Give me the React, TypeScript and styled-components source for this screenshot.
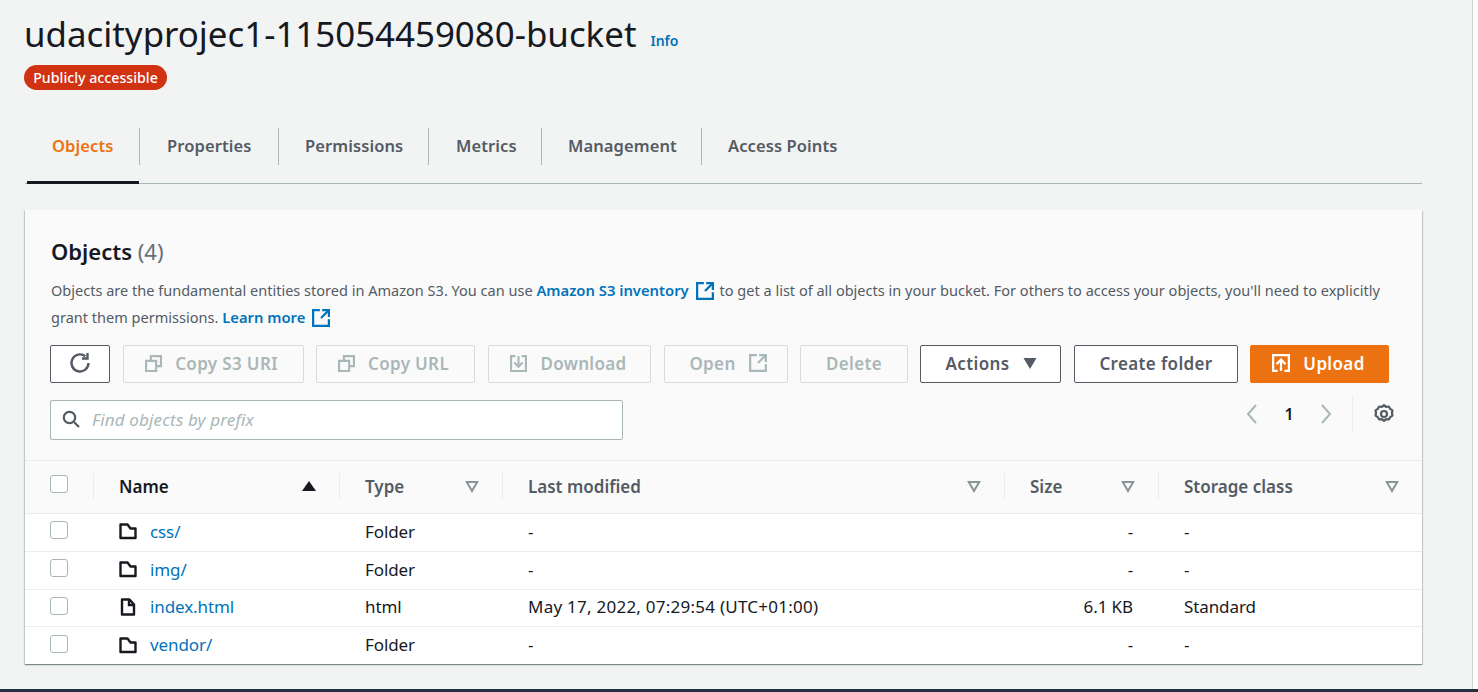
import React from "react";
import styled, { createGlobalStyle } from "styled-components";

const Global = createGlobalStyle`
  html, body { margin: 0; padding: 0; height: 100%; overflow: hidden; background: #f2f3f3; }
  * { box-sizing: border-box; }
  body { font-family: "Noto Sans", "Open Sans", sans-serif; color: #16191f; font-size: 16px; }
`;

const Page = styled.div`
  width: 1478px; height: 692px; display: flex; flex-direction: column; overflow: hidden; background: #f2f3f3;
`;
const Body = styled.div`flex: 1; display: flex; min-height: 0;`;
const Main = styled.main`width: 1473px; padding: 0 0 0 24px; border-right: 1px solid #cfd3d3;`;
const Gutter = styled.div`flex: 1; background: #fff;`;
const Footer = styled.footer`height: 3px; background: #232f3e; flex: none;`;

const TitleRow = styled.div`display: flex; align-items: flex-end; gap: 14px; height: 55px;`;
const Title = styled.h1`margin: 0; font-size: 34.87px; font-weight: 400; line-height: 42px; color: #16191f; white-space: nowrap;`;
const Info = styled.a`font-size: 14px; font-weight: 600; color: #0073bb; line-height: 18px; margin-bottom: 5px;`;
const Badge = styled.div`
  display: inline-flex; align-items: center; justify-content: center; margin-top: 10px; width: 143px; height: 25px;
  border-radius: 13px; background: #d13212; color: #fff; font-size: 14.2px; font-weight: 500;
`;

const Tabs = styled.nav`
  display: flex; margin: 37px 0 0 1px; width: 1397px; height: 57px; border-bottom: 1px solid #aab7b8;
`;
const TabGroup = styled.div`display: flex; margin-left: 2px;`;
const Tab = styled.div<{ $w: number; $pad: number; $active?: boolean; $last?: boolean }>`
  position: relative; width: ${p => p.$w}px; height: 56px; padding: 7px 0 0 ${p => p.$pad}px;
  font-size: 16.5px; font-weight: 600; letter-spacing: 0.1px; line-height: 24px; white-space: nowrap;
  color: ${p => (p.$active ? "#ec7211" : "#545b64")};
  &::after {
    content: ""; position: absolute; right: -1px; top: 1px; height: 37px; width: 1px;
    background: ${p => (p.$last ? "transparent" : "#aab7b8")};
  }
  ${p => p.$active && "&::before { content: ''; position: absolute; left: 0; right: 0; bottom: -1px; height: 3px; background: #16191f; }"}
`;

const Card = styled.section`
  width: 1397px; height: 454px; margin: 26px 0 0 1px; background: #fafafa;
  box-shadow: 0 1px 1px 0 rgba(0,28,36,.3), 1px 1px 1px 0 rgba(0,28,36,.15), -1px 1px 1px 0 rgba(0,28,36,.15);
  display: flex; flex-direction: column;
`;
const CardHead = styled.div`padding: 25px 25px 0 25px; height: 250px; flex: none;`;
const Heading = styled.h2`margin: 0; padding-left: 1px; font-size: 22px; font-weight: 600; line-height: 32px; letter-spacing: 0;`;
const Count = styled.span`font-weight: 400; color: #687078;`;
const Desc = styled.p`
  margin: 10px 0 0; padding-left: 1px; font-size: 14.54px; line-height: 27px; color: #545b64; max-width: 1345px;
`;
const Bold = styled.a`color: #0073bb; font-weight: 600; font-size: 14.8px; display: inline-flex; align-items: center; gap: 7px; margin-right: 2px;`;
const Toolbar = styled.div`display: flex; margin-top: 14px; height: 38px;`;
const Btn = styled.button<{ $w: number; $ml: number; $gap?: number; $nudge?: number; $kind?: "off" | "on" | "primary" }>`
  width: ${p => p.$w}px; margin-left: ${p => p.$ml}px; height: 38px; border-radius: 2px;
  display: inline-flex; align-items: center; justify-content: center; gap: ${p => p.$gap ?? 13}px;
  padding: 0 ${p => Math.max(0, -(p.$nudge ?? 0)) * 2}px 2px ${p => Math.max(0, p.$nudge ?? 0) * 2}px;
  font: 600 17px "Noto Sans", sans-serif; letter-spacing: 0.35px;
  background: ${p => (p.$kind === "primary" ? "#ec7211" : p.$kind === "on" ? "#fff" : "#fafafa")};
  color: ${p => (p.$kind === "primary" ? "#fff" : p.$kind === "on" ? "#545b64" : "#aab7b8")};
  border: 1px solid ${p => (p.$kind === "primary" ? "#ec7211" : p.$kind === "on" ? "#545b64" : "#d5dbdb")};
`;
const SearchRow = styled.div`display: flex; margin-top: 17px; height: 40px;`;
const Search = styled.div`
  width: 573px; height: 40px; display: flex; align-items: center; gap: 12px; padding: 0 0 2px 11px;
  background: #fff; border: 1px solid #aab7b8; border-radius: 2px;
  color: #aab7b8; font-style: italic; font-size: 17px; letter-spacing: 0.15px;
`;
const Pager = styled.div`
  margin-left: auto; display: flex; align-items: center; height: 40px; margin-top: -6px; margin-right: 2px;
`;
const PageNum = styled.span`width: 52px; text-align: center; font-size: 16px; font-weight: 600; color: #16191f;`;
const PagerDivider = styled.span`width: 1px; height: 38px; background: #eaeded; margin: 0 20px 0 15px;`;

const Table = styled.div`flex: 1; display: flex; flex-direction: column;`;
const Columns = "69px 246px 163px 502px 154px 1fr";
const HeadRow = styled.div`
  display: grid; grid-template-columns: ${Columns}; height: 54px; flex: none; align-items: center; padding-bottom: 2px;
  border-top: 1px solid #eaeded; border-bottom: 1px solid #eaeded;
`;
const HeadCell = styled.div<{ $sorted?: boolean }>`
  height: 26px; display: flex; align-items: center; justify-content: space-between;
  padding: 0 23px 0 25px; border-right: 1px solid #eaeded;
  font-size: 17px; font-weight: 600; letter-spacing: 0; color: ${p => (p.$sorted ? "#16191f" : "#545b64")};
  &:last-child { border-right: 0; padding-right: 23px; }
`;
const CheckHead = styled.div`height: 26px; padding: 0 0 4px 25px; display: flex; align-items: center; border-right: 1px solid #eaeded;`;
const Check = styled.span`width: 18px; height: 18px; display: block; background: #fff; border: 1px solid #aab7b8; border-radius: 3px;`;
const Row = styled.div`
  display: grid; grid-template-columns: ${Columns}; flex: 1; align-items: center; background: #fff; padding-bottom: 2px;
  border-bottom: 1px solid #eaeded; font-size: 17px; letter-spacing: -0.1px;
  &:last-child { border-bottom: 0; }
`;
const CheckCell = styled.div`padding-left: 25px; margin-top: -2px;`;
const NameCell = styled.div`display: flex; align-items: center; gap: 13px; padding-left: 25px;`;
const ObjLink = styled.a`color: #0073bb;`;
const Cell = styled.div<{ $right?: boolean; $date?: boolean }>`
  padding-left: ${p => (p.$right ? 0 : 25)}px; padding-right: ${p => (p.$right ? 26 : 0)}px; text-align: ${p => (p.$right ? "right" : "left")};
  white-space: nowrap; letter-spacing: ${p => (p.$date ? "0.25px" : "inherit")};
`;

const Svg = styled.svg<{ $s?: number }>`
  width: ${p => p.$s ?? 16}px; height: ${p => p.$s ?? 16}px; flex: none; fill: none; stroke: currentColor; stroke-width: 2;
`;
const Ext = () => (
  <Svg $s={18} viewBox="0 0 16 16"><path d="M7 1H1v14h14V9" /><path d="M9 1h6v6" /><path d="M15 1L8 8" /></Svg>
);
const Copy = () => (
  <Svg $s={17} viewBox="0 0 16 16"><path d="M1 5.5h9.5V15H1z" /><path d="M5.5 5V1H15v9.5h-4.5" /></Svg>
);
const Download = () => (
  <Svg $s={17} viewBox="0 0 16 16"><path d="M5 1H1v14h14V1h-4" /><path d="M8 1v9" /><path d="M4 7l4 4 4-4" /></Svg>
);
const Filter = () => (
  <Svg $s={14} viewBox="0 0 14 14" style={{ color: "#879596" }}><path d="M1.8 3h10.4L7 12z" /></Svg>
);
const Folder = () => (
  <Svg $s={18} viewBox="0 0 18 18" style={{ color: "#16191f", strokeWidth: 2.4 }}><path d="M1.5 2.5h7l3 4h5v9.5h-15z" strokeLinejoin="round" /></Svg>
);
const FileIcon = () => (
  <Svg $s={18} viewBox="0 0 18 18" style={{ color: "#16191f", strokeWidth: 2.4 }}><path d="M3 1.5h7.5l4.5 5v10H3z" strokeLinejoin="round" /><path d="M10 1.5v5.5h5" /></Svg>
);
const rows = [
  { name: "css/", type: "Folder", mod: "-", size: "-", cls: "-", file: false },
  { name: "img/", type: "Folder", mod: "-", size: "-", cls: "-", file: false },
  { name: "index.html", type: "html", mod: "May 17, 2022, 07:29:54 (UTC+01:00)", size: "6.1 KB", cls: "Standard", file: true },
  { name: "vendor/", type: "Folder", mod: "-", size: "-", cls: "-", file: false },
];

export default function App() {
  return (
    <Page>
      <Global />
      <Body>
        <Main>
          <TitleRow>
            <Title>udacityprojec1-115054459080-bucket</Title>
            <Info>Info</Info>
          </TitleRow>
          <Badge>Publicly accessible</Badge>
          <Tabs>
            <TabGroup>
              <Tab $w={112} $pad={25} $active>Objects</Tab>
              <Tab $w={139} $pad={28}>Properties</Tab>
              <Tab $w={150} $pad={27}>Permissions</Tab>
              <Tab $w={113} $pad={28}>Metrics</Tab>
              <Tab $w={160} $pad={27}>Management</Tab>
              <Tab $w={160} $pad={27} $last>Access Points</Tab>
            </TabGroup>
          </Tabs>
          <Card>
            <CardHead>
              <Heading>Objects <Count>(4)</Count></Heading>
              <Desc>
                Objects are the fundamental entities stored in Amazon S3. You can use <Bold>Amazon S3 inventory <Ext /></Bold> to get a list of all objects in your bucket. For others to access your objects, you'll need to explicitly grant them permissions. <Bold>Learn more <Ext /></Bold>
              </Desc>
              <Toolbar>
                <Btn $w={60} $ml={0} $kind="on">
                  <Svg $s={24} viewBox="0 0 24 24" style={{ strokeWidth: 2.4 }}><path d="M20.5 12a8.5 8.5 0 1 1-3.2-6.7" /><path d="M19.5 2v5.5H14" /></Svg>
                </Btn>
                <Btn $w={181} $ml={13} $nudge={-2}><Copy />Copy S3 URI</Btn>
                <Btn $w={159} $ml={12} $nudge={-2}><Copy />Copy URL</Btn>
                <Btn $w={163} $ml={13} $nudge={-1}><Download />Download</Btn>
                <Btn $w={124} $ml={13} $nudge={2}>Open<Ext /></Btn>
                <Btn $w={108} $ml={12}>Delete</Btn>
                <Btn $w={141} $ml={12} $gap={14} $nudge={1} $kind="on">
                  Actions
                  <Svg $s={14} viewBox="0 0 14 14" style={{ fill: "currentColor", stroke: "none" }}><path d="M0.5 2h13L7 13z" /></Svg>
                </Btn>
                <Btn $w={164} $ml={13} $kind="on">Create folder</Btn>
                <Btn $w={139} $ml={12} $nudge={-1} $kind="primary">
                  <Svg $s={18} viewBox="0 0 16 16"><path d="M5 15H1V1h14v14h-4" /><path d="M8 15V6" /><path d="M4 9l4-4 4 4" /></Svg>
                  Upload
                </Btn>
              </Toolbar>
              <SearchRow>
                <Search>
                  <Svg $s={18} viewBox="0 0 18 18" style={{ color: "#545b64", strokeWidth: 2.2 }}><circle cx="7.5" cy="7.5" r="5.7" /><path d="M12 12l5 5" /></Svg>
                  Find objects by prefix
                </Search>
                <Pager>
                  <Svg $s={22} viewBox="0 0 22 22" style={{ color: "#aab7b8" }}><path d="M15 2l-8 9 8 9" /></Svg>
                  <PageNum>1</PageNum>
                  <Svg $s={22} viewBox="0 0 22 22" style={{ color: "#aab7b8" }}><path d="M7 2l8 9-8 9" /></Svg>
                  <PagerDivider />
                  <Svg $s={22} viewBox="0 0 22 22" style={{ color: "#545b64", strokeWidth: 2.2 }}>
                    <path d="M11 2.2l2 1.7 2.8-.4 1.4 2.4 2.3 1.5-.6 2.6.6 2.6-2.3 1.5-1.4 2.4-2.8-.4-2 1.7-2-1.7-2.8.4-1.4-2.4-2.3-1.5.6-2.6-.6-2.6 2.3-1.5 1.4-2.4 2.8.4z" strokeLinejoin="round" />
                    <circle cx="11" cy="11" r="3" />
                  </Svg>
                </Pager>
              </SearchRow>
            </CardHead>
            <Table>
              <HeadRow>
                <CheckHead><Check /></CheckHead>
                <HeadCell $sorted>
                  Name
                  <Svg $s={14} viewBox="0 0 14 14" style={{ fill: "#16191f", stroke: "none" }}><path d="M7 2l7 10H0z" /></Svg>
                </HeadCell>
                <HeadCell>Type<Filter /></HeadCell>
                <HeadCell>Last modified<Filter /></HeadCell>
                <HeadCell>Size<Filter /></HeadCell>
                <HeadCell>Storage class<Filter /></HeadCell>
              </HeadRow>
              {rows.map(r => (
                <Row key={r.name}>
                  <CheckCell><Check /></CheckCell>
                  <NameCell>
                    {r.file ? <FileIcon /> : <Folder />}
                    <ObjLink>{r.name}</ObjLink>
                  </NameCell>
                  <Cell>{r.type}</Cell>
                  <Cell $date={r.file}>{r.mod}</Cell>
                  <Cell $right>{r.size}</Cell>
                  <Cell>{r.cls}</Cell>
                </Row>
              ))}
            </Table>
          </Card>
        </Main>
        <Gutter />
      </Body>
      <Footer />
    </Page>
  );
}
